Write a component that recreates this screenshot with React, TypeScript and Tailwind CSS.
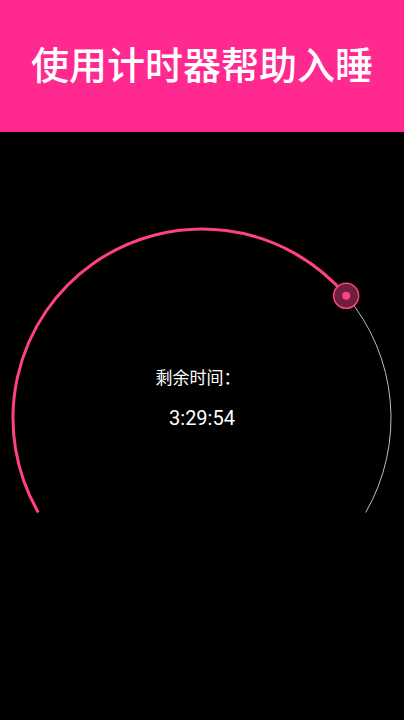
import React from 'react';

const CX = 202;
const CY = 286;
const R = 189;

const polar = (deg: number) => {
  const a = (deg * Math.PI) / 180;
  return { x: CX + R * Math.cos(a), y: CY - R * Math.sin(a) };
};

const SleepTimerDial: React.FC<{ knobAngle: number }> = ({ knobAngle }) => {
  const start = polar(210);
  const end = polar(-30);
  const knob = polar(knobAngle);

  const pinkArc = `M ${start.x} ${start.y} A ${R} ${R} 0 0 1 ${knob.x} ${knob.y}`;
  const grayArc = `M ${knob.x} ${knob.y} A ${R} ${R} 0 0 1 ${end.x} ${end.y}`;

  return (
    <svg width="404" height="588" viewBox="0 0 404 588" className="block">
      <path d={grayArc} fill="none" stroke="#bdbdbd" strokeWidth="1" />
      <path d={pinkArc} fill="none" stroke="#ff4081" strokeWidth="3" />
      <circle cx={knob.x} cy={knob.y} r="12.5" fill="#6e1f3e" stroke="#ff4081" strokeWidth="1.5" />
      <circle cx={knob.x} cy={knob.y} r="4" fill="#ff4081" />
    </svg>
  );
};

export default function App() {
  return (
    <div
      className="w-[404px] h-[720px] bg-black flex flex-col overflow-hidden"
      style={{ fontFamily: "Roboto, 'Noto Sans CJK SC', sans-serif" }}
    >
      <header className="h-[132px] bg-[#ff2990] flex items-center justify-center shrink-0">
        <h1 className="text-white text-[38px] leading-none pb-[1px] font-medium">使用计时器帮助入睡</h1>
      </header>

      <main className="relative flex-1">
        <SleepTimerDial knobAngle={40.3} />
        <div className="absolute inset-x-0 top-[234px] flex flex-col items-center text-white">
          <p className="text-[17px] leading-[24px] pr-[8px]">剩余时间：</p>
          <p className="text-[20px] leading-[28px] mt-[14px]">3:29:54</p>
        </div>
      </main>
    </div>
  );
}
